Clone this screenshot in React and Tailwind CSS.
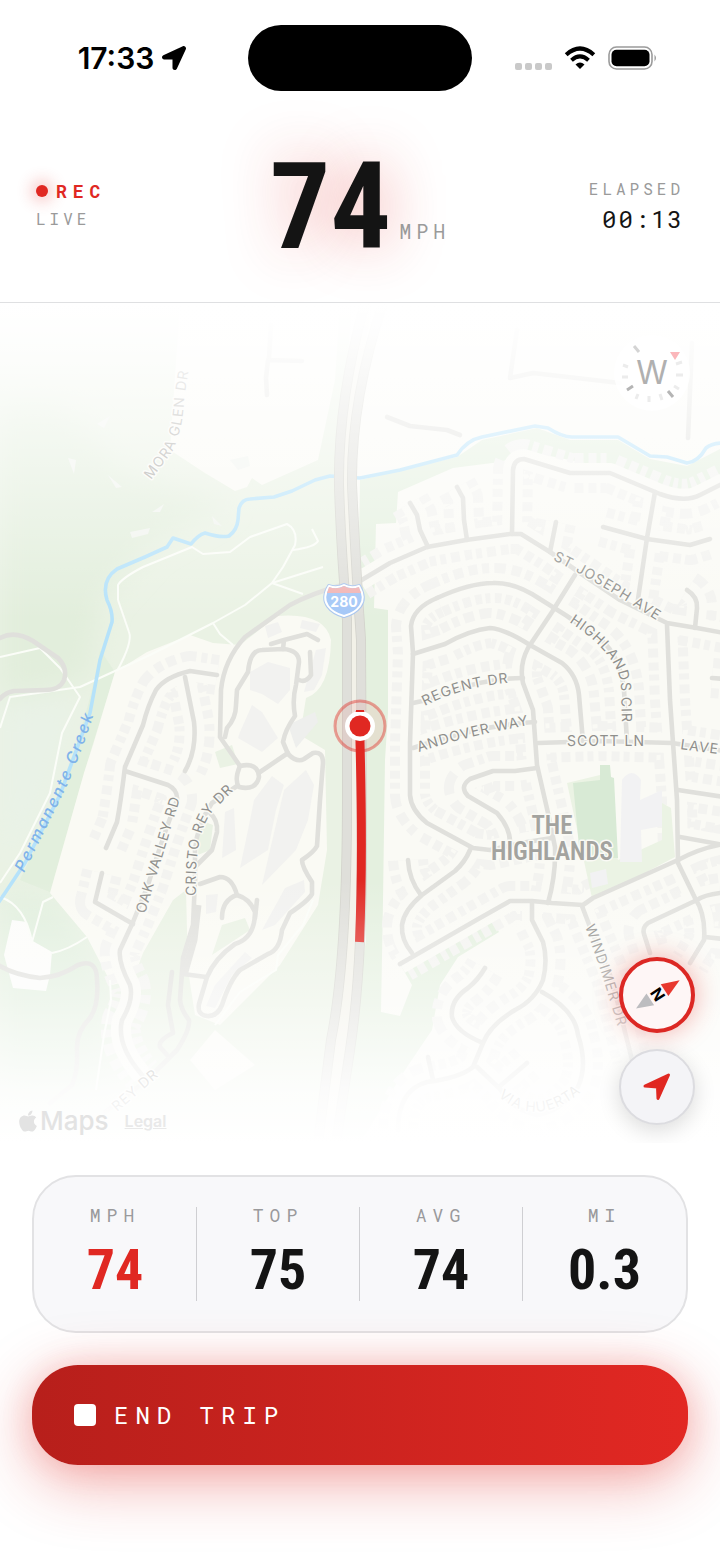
import { FaApple, FaLocationArrow } from 'react-icons/fa'

const STATS = [
  { label: 'MPH', value: '74', active: true },
  { label: 'TOP', value: '75' },
  { label: 'AVG', value: '74' },
  { label: 'MI', value: '0.3' },
]

const CREEK =
  'M-4 906 L5 893 L25 863 L60 795 L90 713 L100 660 L112 622 Q113 612 107 600 Q101 580 117 569 L145 557 L167 547 L173 538 L191 544 Q198 535 205 533 Q220 538 229 536 Q237 530 238 520 L239 508 Q242 499 250 499 L274 497 L292 491 L315 480 L330 476 L360 478 L400 470 L457 455 Q467 440 482 437 L535 426 L548 428 Q562 437 572 437 L618 437 L650 456 L667 457 L687 463 Q698 462 706 448 Q712 443 724 443'

const WEST_ROADS = [
  'M217 675 L190 671 Q165 677 156 690 Q148 705 143 725 L125 767 Q121 800 117 822 L106 848',
  'M185 677 L194 722 Q197 750 185 771',
  'M125 771 L168 785 Q178 790 177 800 Q165 830 148 885 L133 922 L120 950 Q118 962 130 985 Q134 1000 122 1020 Q116 1045 142 1075',
  'M102 873 L95 902 L133 924',
  'M345 584 Q310 594 290 605 L245 637 Q224 660 221 690 L220 737 L240 766',
  'M240 766 Q258 762 259 777 Q256 791 239 787 Q234 780 240 766',
  'M237 786 L212 803 Q197 825 195 850 L195 880',
  'M271 644 L284 640 L307 634 L318 640 M284 640 L283 649',
  'M225 737 L227 728 Q236 718 236 705 L237 690 L248 672 Q250 650 262 650 L283 649 Q299 650 299 662 L296 685 Q292 700 295 716 Q285 730 283 742 L288 754 Q297 763 304 759 L313 753 Q323 751 323 763 L320 800 L317 846 Q314 852 302 860 Q302 867 312 882 L312 894 Q308 901 290 913 L282 930 Q280 950 268 954 L240 970 Q230 980 222 1005 Q217 1017 207 1016 Q197 1015 199 1004 L207 977 Q215 958 235 944 Q255 938 255 912 Q250 899 237 895 Q232 877 220 877 L200 884',
  'M310 652 L311 675 Q306 683 299 680',
  'M288 753 L260 772',
  'M210 813 Q218 820 217 832 L212 850 L196 866',
  'M237 895 Q222 900 222 918 M257 900 L255 918',
]

const EAST_ROADS = [
  'M360 581 L390 563 L427 547 L466 540 L510 534 L521 534 L550 552 L580 573 L620 600 L667 623 L697 628 L724 633',
  'M512 534 L513 470 Q514 459 524 459 L570 473 L610 473 L660 494 Q685 503 700 495 L724 483',
  'M410 503 L417 515 L420 530 L428 547',
  'M457 487 L463 498 L464 520 L467 540',
  'M556 522 L550 552',
  'M655 492 L647 538 L637 606',
  'M603 527 L647 539 L690 545 L710 539',
  'M687 590 Q698 597 697 608 L695 628',
  'M437 598 Q470 583 493 583 Q515 582 540 599 L567 616 L600 639 Q620 655 624 690 L627 742',
  'M437 598 Q413 608 411 626 L413 653 L410 743 L410 795 Q411 810 427 823 L473 848 L490 850 L527 842 L552 838',
  'M413 654 L445 644 Q470 630 490 628 Q505 629 530 645 L562 663 Q577 675 579 695 L583 742',
  'M575 575 L552 612 L528 648 Q519 665 523 683 L533 710 L537 765 L548 813 L555 847 Q556 875 548 903',
  'M413 703 L427 700 Q480 678 523 678',
  'M413 748 Q480 725 535 722',
  'M538 743 L600 741 L672 743 L724 751',
  'M667 625 L670 700 L677 800 L678 863 L695 898 Q706 915 704 940 L690 963',
  'M537 768 L515 771 L493 771 L470 779 Q459 787 468 796 L497 813 Q510 828 510 842',
  'M678 790 L724 797',
  'M680 837 L724 845',
  'M724 844 Q700 848 678 860 L593 898 L583 905 L552 903 L532 901 L510 901 L480 918 L400 964',
  'M470 850 Q465 862 455 871 L422 895 Q404 910 402 925 Q401 940 412 953',
  'M408 860 Q409 880 421 895',
  'M532 902 L532 920 L543 942 Q548 960 543 980 Q535 1000 515 1010 Q490 1025 483 1043 L473 1067 Q460 1078 427 1082 Q398 1090 398 1130',
  'M485 968 Q478 980 468 988 Q450 1000 452 1017 Q456 1032 483 1043',
  'M542 992 Q575 1010 578 1035 Q588 1065 578 1087 Q560 1112 537 1115 Q512 1110 500 1089 L477 1067',
  'M527 1063 L500 1086',
  'M582 906 L590 927 L612 980 L632 1060',
  'M720 893 Q704 895 697 900 L648 923 Q642 928 644 934 L650 953',
  'M705 937 L724 939',
  'M712 678 L724 679',
]

const FAINT_ROADS = [
  'M267 395 L266 378 L268 360 L302 361 M269 358 L271 325',
  'M517 330 L510 378 L533 373 L620 383',
  'M692 343 L688 438',
  'M387 417 L410 426 L447 430 L460 435',
  'M0 638 Q15 630 33 641 L58 658 Q68 668 64 680 Q60 690 45 690 L14 691 Q4 693 0 699',
  'M0 966 Q15 975 40 978 Q60 977 78 965 Q97 958 97 980 Q99 1005 90 1018 Q76 1032 77 1050 Q78 1072 72 1085 L50 1103',
  'M172 972 L168 1005 L173 1033 Q158 1040 160 1047 L167 1055',
  'M183 974 L206 977',
  'M428 1057 L433 1080',
  'M195 880 L193 925 L183 958 L180 1000 Q181 1010 189 1020 Q190 1030 177 1050 L147 1080 L105 1112',
]

const TRAILS = [
  'M118 600 L118 585 Q122 578 143 567 L192 547 L203 554 L230 552 L250 537 L287 524 Q298 530 295 545 L283 567 L272 583 L245 605 L213 623 L150 655 L80 687 L10 697 L0 728',
  'M293 550 Q315 547 318 541 L312 529',
  'M272 583 L323 567 M272 583 L303 594',
  'M118 600 L129 632 Q133 642 117 671',
  'M213 623 L220 634 L233 645',
  'M0 657 L40 648 L60 668 L80 697 L62 733 L50 793 L20 853 L0 883',
  'M0 897 Q25 905 32 942 L43 902 L53 897 M52 953 Q68 950 87 937',
  'M313 900 L303 925 L278 955 L276 970 L240 992 L215 1025',
  'M110 980 L111 1000 L104 1035 L96 1090',
]

const LABELS = [
  { id: 'mora', text: 'MORA GLEN DR', d: 'M151 480 L172 452 Q183 430 184 400 L190 362', fill: '#a3a39f' },
  { id: 'joseph', text: 'ST JOSEPH AVE', d: 'M553 560 Q600 583 662 624', fill: '#8f8f8c' },
  { id: 'highlands', text: 'HIGHLANDS CIR', d: 'M569 622 Q620 655 621 688 L622 728', fill: '#8f8f8c' },
  { id: 'regent', text: 'REGENT DR', d: 'M425 706 Q462 686 518 682', fill: '#8f8f8c' },
  { id: 'andover', text: 'ANDOVER WAY', d: 'M419 752 Q470 735 535 724', fill: '#8f8f8c' },
  { id: 'scott', text: 'SCOTT LN', d: 'M567 746 L660 746', fill: '#8f8f8c' },
  { id: 'lave', text: 'LAVE', d: 'M680 749 L740 757', fill: '#8f8f8c' },
  { id: 'oak', text: 'OAK VALLEY RD', d: 'M145 914 L182 792', fill: '#8f8f8c' },
  { id: 'cristo', text: 'CRISTO REY DR', d: 'M196 896 Q194 835 212 812 L244 780', fill: '#8f8f8c' },
  { id: 'windimer', text: 'WINDIMER DR', d: 'M585 927 Q600 965 620 1035', fill: '#8f8f8c' },
  { id: 'rey', text: 'REY DR', d: 'M117 1112 L168 1068', fill: '#7f7f7c' },
  { id: 'huerta', text: 'VIA HUERTA', d: 'M498 1096 Q538 1132 588 1086', fill: '#8f8f8c' },
]

const HIGHWAY = [
  'M365 303 Q338 400 339 485 Q341 550 347 620 L347 800 Q347 960 331 1040 L318 1143',
  'M383 303 Q351 400 352 485 Q356 570 361 640 L362 850 Q362 970 350 1050 L336 1143',
]

// streets that have a row of houses on each side
const HOUSE_ROADS = [...WEST_ROADS.slice(0, 4), ...EAST_ROADS]

function StatusBar() {
  return (
    <div className="grid h-[116px] grid-cols-[1fr_224px_1fr] items-center text-black">
      <div className="flex items-center justify-center gap-2 pl-4 font-['Inter',sans-serif] text-3xl font-semibold">
        <span>17:33</span>
        <FaLocationArrow className="size-6" />
      </div>
      <div className="h-[66px] rounded-full bg-black" />
      <div className="flex items-center justify-center gap-3 pr-5">
        <div className="flex gap-[3px] pt-4">
          <span className="size-[7px] rounded-xs bg-[#c9c9c9]" />
          <span className="size-[7px] rounded-xs bg-[#c9c9c9]" />
          <span className="size-[7px] rounded-xs bg-[#c9c9c9]" />
          <span className="size-[7px] rounded-xs bg-[#c9c9c9]" />
        </div>
        <svg viewBox="0 0 32 24" className="h-6 w-8">
          <path d="M16 23 L11.5 18.4 Q16 14.8 20.5 18.4 Z" />
          <path d="M7.5 14.2 Q16 6.6 24.5 14.2" fill="none" stroke="black" strokeWidth="4" />
          <path d="M2.2 8.7 Q16 -3.6 29.8 8.7" fill="none" stroke="black" strokeWidth="4.2" />
        </svg>
        <svg viewBox="0 0 50 24" className="h-6 w-[50px]">
          <rect x="1" y="1" width="43" height="22" rx="7.5" fill="none" stroke="#9b9b9b" strokeWidth="1.6" />
          <rect x="3.5" y="3.8" width="38" height="16.4" rx="5" />
          <path d="M46.5 8.5 Q49.5 12 46.5 15.5 Z" fill="#9b9b9b" />
        </svg>
      </div>
    </div>
  )
}

function TripHeader() {
  return (
    <header className="border-b border-[#dfe0e2]">
      <StatusBar />
      <div className="grid h-[186px] grid-cols-[1fr_auto_1fr] items-center px-9 pb-1 font-['Roboto_Mono','DejaVu_Sans_Mono',monospace]">
        <div className="pb-1">
          <div className="flex items-center gap-2 text-lg leading-7 font-bold tracking-[6px] text-[#e02822]">
            <span className="size-3 rounded-full bg-[#e02822] shadow-[0_0_16px_4px_rgba(224,40,34,0.3)]" />
            REC
          </div>
          <div className="text-base leading-7 tracking-[4px] text-[#9a9a9a]">LIVE</div>
        </div>
        <div className="flex items-end gap-2">
          <span className="font-['Roboto_Condensed','DejaVu_Sans_Condensed',sans-serif] text-[120px] leading-none font-bold text-[#141414] [text-shadow:0_0_60px_rgba(224,40,34,0.4)]">
            74
          </span>
          <span className="pb-[22px] text-xl leading-7 tracking-[5px] text-[#9a9a9a]">MPH</span>
        </div>
        <div className="pb-1 text-right">
          <div className="text-base leading-7 tracking-[4px] text-[#9a9a9a]">ELAPSED</div>
          <div className="text-2xl leading-8 tracking-[2px] text-[#141414]">00:13</div>
        </div>
      </div>
    </header>
  )
}

function MapDrawing() {
  return (
    <svg
      viewBox="0 303 720 840"
      preserveAspectRatio="xMidYMid slice"
      className="absolute inset-0 h-full w-full font-['Inter',sans-serif]"
      fill="none"
      strokeLinejoin="round"
    >
      <defs>
        <linearGradient id="fadeTop" x1="0" y1="303" x2="0" y2="620" gradientUnits="userSpaceOnUse">
          <stop offset="0" stopColor="#fff" />
          <stop offset="0.08" stopColor="#fff" stopOpacity="0.96" />
          <stop offset="0.4" stopColor="#fff" stopOpacity="0.62" />
          <stop offset="1" stopColor="#fff" stopOpacity="0" />
        </linearGradient>
        <linearGradient id="fadeBottom" x1="0" y1="880" x2="0" y2="1143" gradientUnits="userSpaceOnUse">
          <stop offset="0" stopColor="#fff" stopOpacity="0" />
          <stop offset="0.45" stopColor="#fff" stopOpacity="0.46" />
          <stop offset="0.8" stopColor="#fff" stopOpacity="0.88" />
          <stop offset="1" stopColor="#fff" />
        </linearGradient>
        <filter id="soft">
          <feGaussianBlur stdDeviation="14" />
        </filter>
        {LABELS.map((l) => (
          <path key={l.id} id={l.id} d={l.d} />
        ))}
        <path id="creekName" d="M24 873 L60 800 Q82 755 96 706" />
      </defs>

      {/* land */}
      <rect y="303" width="720" height="840" fill="#fafaf5" />
      <path d="M0 303 H352 L338 480 L352 700 L346 900 L325 1143 H0 Z" fill="#eaf2e4" />
      <g filter="url(#soft)">
        <path d="M0 400 L60 400 L120 470 L230 500 L150 545 L100 600 L90 680 L0 700 Z" fill="#e2eedc" />
        <path d="M0 700 L80 700 L40 820 L0 870 Z" fill="#e9f2e7" />
        <path d="M0 890 L60 900 L110 980 L100 1100 L0 1100 Z" fill="#e1efde" />
      </g>
      <path d="M100 650 Q85 745 20 880 L50 892 L84 773 L115 672 Z" fill="#e2efdd" />
      <path d="M170 450 L205 473 L235 491 L247 487 L252 478 L262 485 L318 460 L335 380 L340 303 H180 Z" fill="#fafaf4" />
      <path d="M115 672 L147 652 L190 635 L213 643 L240 645 L277 616 Q325 612 331 640 Q330 690 306 698 L300 735 L325 750 L327 850 L318 905 L280 965 L220 1025 L195 1015 L188 970 L186 890 L173 900 L143 953 L133 980 L112 985 L87 937 L50 893 L84 773 L93 745 Z" fill="#fafaf4" />
      <path d="M215 752 L232 745 L238 764 L220 768 Z M222 925 L245 918 L250 930 L212 955 Z M200 820 L213 825 L210 850 L198 855 Z" fill="#eaf2e4" />
      <path d="M360 480 L457 457 L482 440 L537 428 L570 440 L618 440 L650 459 L687 466 L724 447 V478 L688 494 L610 468 L530 452 L500 462 L453 468 L398 492 L396 523 L376 524 L374 608 L388 610 L388 713 L385 760 L383 900 L381 1012 L400 1016 L412 985 L400 964 L488 915 L499 932 L458 957 L440 985 L432 1030 L405 1070 L360 1143 H335 L366 940 L366 700 L358 600 Z" fill="#e4f0df" />
      <path d="M4 955 L12 920 L27 922 L31 940 L52 952 L50 975 L46 991 L13 988 Z" fill="#fcfcfa" />
      <path d="M190 1060 L215 1030 L255 1065 L215 1090 Z" fill="#fafaf4" />

      {/* houses along the streets, then the front yards */}
      <g stroke="#f3f3f0" strokeWidth="40">
        {HOUSE_ROADS.map((d) => (
          <path key={d} d={d} strokeDasharray="8 4 6 5 9 5" />
        ))}
      </g>
      <g stroke="#fafaf5" strokeWidth="20">
        {HOUSE_ROADS.map((d) => (
          <path key={d} d={d} />
        ))}
      </g>
      <g fill="#f2f2f0">
        <path d="M250 672 L268 662 L290 668 L290 690 L278 704 L262 694 L250 690 Z" />
        <path d="M240 732 L252 705 L262 712 L278 738 L262 752 L238 738 Z" />
        <path d="M254 800 L272 776 L284 785 L276 810 L268 850 L240 868 L248 830 Z" />
        <path d="M284 790 L306 770 L314 785 L308 820 L296 850 L262 885 L270 850 Z" />
        <path d="M265 626 L278 622 L282 632 L268 638 Z M302 620 L320 624 L316 632 L300 628 Z M316 650 L326 648 L322 675 L314 690 L304 692 Z" />
        <path d="M225 812 L234 808 L236 850 L222 858 Z M206 895 L218 894 L216 912 L206 914 Z" />
        <path d="M215 985 L245 952 L252 958 L232 975 L215 1008 L206 1006 Z M262 930 L285 888 L304 880 L305 892 L275 925 Z" />
        <path d="M288 725 L315 712 L318 722 L296 748 Z" fill="#eeefed" />
      </g>
      <g fill="#f1f4ef">
        <path d="M130 532 L150 528 L148 534 L132 538 Z M152 512 L164 504 L160 512 Z M212 516 L222 526 L214 524 Z M97 424 L110 416 L104 428 Z M108 475 L122 487 L116 488 Z M68 458 L76 460 L74 474 Z M230 460 L248 456 L250 466 L238 470 Z" />
      </g>

      {/* park and school */}
      <path d="M567 783 L600 775 L618 860 L662 840 L662 803 L671 808 L675 857 L637 877 L592 898 Z" fill="#ebf3e4" />
      <path d="M573 783 L600 780 V765 H610 L611 777 L614 778 L618 858 L580 857 Z" fill="#d8ead5" />
      <path d="M622 780 Q632 766 641 780 L640 800 L662 790 V826 L641 830 L642 862 L620 862 Z M590 873 L606 869 L608 884 L592 888 Z" fill="#f2f2f3" />

      {/* water and trails */}
      <g stroke="#fbfdf8" strokeWidth="2">
        {TRAILS.map((d) => (
          <path key={d} d={d} />
        ))}
      </g>
      <path d={CREEK} stroke="#b5e2fa" strokeWidth="3.6" />

      {/* streets */}
      <g stroke="#e0e0dc" strokeWidth="4.6" strokeLinecap="round">
        {[...WEST_ROADS, ...EAST_ROADS, ...FAINT_ROADS].map((d) => (
          <path key={d} d={d} />
        ))}
      </g>
      <path d="M198 905 L194 940 L184 975" stroke="#e0e0dc" strokeWidth="7" />

      {/* interstate */}
      <path d="M366 303 Q345 400 346 500 Q348 560 354 640 L355 850 Q352 1000 328 1143" stroke="#f2f1e8" strokeWidth="14" />
      <g stroke="#d2d2cb" strokeWidth="10">
        {HIGHWAY.map((d) => (
          <path key={d} d={d} />
        ))}
      </g>
      <g stroke="#dfdfda" strokeWidth="8.4">
        {HIGHWAY.map((d) => (
          <path key={d} d={d} />
        ))}
      </g>

      {/* street names */}
      <g fontSize="14" stroke="#fafaf5" strokeWidth="3" paintOrder="stroke" letterSpacing="1">
        {LABELS.map((l) => (
          <text key={l.id} fill={l.fill}>
            <textPath href={`#${l.id}`}>{l.text}</textPath>
          </text>
        ))}
      </g>
      <text fontSize="16" fontStyle="italic" fontWeight="500" fill="#80b3ea" letterSpacing="2">
        <textPath href="#creekName">Permanente Creek</textPath>
      </text>
      <g
        className="font-['Roboto_Condensed',sans-serif]"
        fontSize="25"
        fontWeight="600"
        fill="#a3a39f"
        stroke="#fafaf5"
        strokeWidth="3"
        paintOrder="stroke"
        textAnchor="middle"
      >
        <text x="552" y="834">THE</text>
        <text x="552" y="860">HIGHLANDS</text>
      </g>

      {/* interstate shield */}
      <path d="M329 586 Q337 589 344 585 Q351 589 359 586 Q366 598 360 606 Q355 613 344 616 Q333 613 328 606 Q322 598 329 586 Z" stroke="#a9c6ee" strokeWidth="4" />
      <path d="M329 586 Q337 589 344 585 Q351 589 359 586 Q366 598 360 606 Q355 613 344 616 Q333 613 328 606 Q322 598 329 586 Z" fill="#a4c7f7" stroke="#fff" strokeWidth="2" />
      <path d="M329 587 Q337 590 344 586 Q351 590 359 587 L361 593 H327 Z" fill="#f1b4b4" />
      <text x="344" y="607" textAnchor="middle" fontSize="14" fontWeight="700" fill="#fff">
        280
      </text>

      {/* recorded route and current position */}
      <path d="M360 711 V742 Q363 860 359.5 942" stroke="#e02822" strokeWidth="9" />
      <rect y="303" width="720" height="320" fill="url(#fadeTop)" />
      <rect y="880" width="720" height="263" fill="url(#fadeBottom)" />
      <circle cx="360" cy="726" r="25" fill="#e02822" fillOpacity="0.08" stroke="#e02822" strokeOpacity="0.42" strokeWidth="3" />
      <circle cx="360" cy="726" r="15" fill="#fff" />
      <path d="M356 711 H364" stroke="#e02822" strokeWidth="2" />
      <circle cx="360" cy="726" r="10.5" fill="#e02822" />
    </svg>
  )
}

function LiveMap() {
  return (
    <main className="relative min-h-[480px] flex-1 overflow-hidden">
      <MapDrawing />

      <button
        type="button"
        aria-label="Map heading"
        className="absolute top-8 right-[30px] flex size-[76px] items-center justify-center rounded-full bg-white/90 font-['Inter',sans-serif] text-[32px] text-[#b0b0b0]"
      >
        <svg viewBox="0 0 76 76" className="absolute inset-0" fill="none" stroke="#ececec" strokeWidth="3">
          <path d="M20 11 L25 17" stroke="#d4d4d4" />
          <path d="M13 55 L19 51 M54 56 L59 62" stroke="#b5b5b5" />
          <path d="M8 42 H14 M62 40 H69 M60 51 L65 54 M24 59 L22 64 M35 61 V67 M46 59 L48 65 M62 29 L68 27 M9 30 L14 32" />
          <path d="M56 17 H66 L61 25 Z" fill="#fbb6ba" stroke="none" />
        </svg>
        W
      </button>

      <div className="absolute right-[25px] bottom-[18px] flex flex-col gap-4">
        <button
          type="button"
          aria-label="Point north"
          className="size-[76px] rounded-full border-4 border-[#dc2824] bg-[#fef6f6] shadow-[0_0_26px_rgba(224,40,34,0.36)]"
        >
          <svg viewBox="0 0 68 68" className="size-full">
            <g transform="rotate(57 34 34)">
              <path d="M34 7 L41 25 H27 Z" fill="#e8382f" />
              <path d="M34 59 L41 42 H27 Z" fill="#bdbdc0" />
              <text x="34" y="39" textAnchor="middle" className="font-['Inter',sans-serif]" fontSize="16" fontWeight="700">
                N
              </text>
            </g>
          </svg>
        </button>
        <button
          type="button"
          aria-label="Center on my location"
          className="flex size-[76px] items-center justify-center rounded-full border-2 border-[#dcdce0] bg-[#f4f4f7] shadow-[0_6px_22px_rgba(0,0,0,0.14)]"
        >
          <svg viewBox="0 0 28 28" className="size-7">
            <path d="M25.5 2 L15 25.5 L14.5 14 L2 13 Z" fill="#e02822" stroke="#e02822" strokeWidth="3" strokeLinejoin="round" />
          </svg>
        </button>
      </div>

      <div className="absolute bottom-1 left-4 flex items-center gap-4 font-['Inter',sans-serif] text-[#e3e3e3]">
        <span className="flex items-center text-[26px] leading-9 font-medium">
          <FaApple className="size-6" />
          Maps
        </span>
        <a href="#legal" className="text-base font-semibold text-[#e9e9e9] underline">
          Legal
        </a>
      </div>
    </main>
  )
}

function TripStats() {
  return (
    <dl className="grid grid-cols-4 divide-x divide-[#cfcfd2] rounded-[44px] border-2 border-[#e2e2e4] bg-[#f8f8fa] py-[30px]">
      {STATS.map((s) => (
        <div key={s.label} className="flex h-[94px] flex-col items-center justify-between">
          <dt className="font-['Roboto_Mono','DejaVu_Sans_Mono',monospace] text-lg leading-4 tracking-[6px] text-[#9a9a9c]">{s.label}</dt>
          <dd
            className={`font-['Roboto_Condensed','DejaVu_Sans_Condensed',sans-serif] text-[56px] leading-[62px] font-bold ${
              s.active ? 'text-[#e02822]' : 'text-[#141414]'
            }`}
          >
            {s.value}
          </dd>
        </div>
      ))}
    </dl>
  )
}

export default function App() {
  return (
    <div className="flex min-h-screen flex-col overflow-x-hidden bg-white">
      <TripHeader />
      <LiveMap />
      <footer className="flex flex-col gap-8 px-8 pt-8 pb-[100px]">
        <TripStats />
        <button
          type="button"
          className="relative flex h-[100px] items-center gap-[18px] rounded-[46px] bg-linear-to-r from-[#b71f1b] to-[#e22823] px-[42px] font-['Roboto_Mono','DejaVu_Sans_Mono',monospace] text-2xl tracking-[7px] text-white shadow-[0_16px_64px_rgba(224,40,34,0.38),0_0_32px_rgba(224,40,34,0.16)]"
        >
          <span className="size-[22px] rounded-sm bg-white" />
          END TRIP
        </button>
      </footer>
    </div>
  )
}
